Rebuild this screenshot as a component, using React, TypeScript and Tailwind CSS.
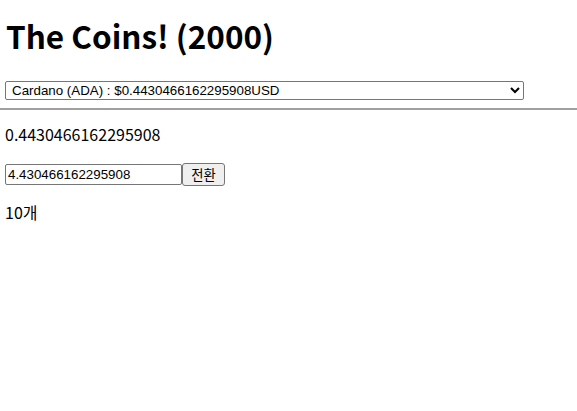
import { useState } from "react";

export default function App() {
  const [amount, setAmount] = useState("4.430466162295908");
  const price = 0.4430466162295908;

  return (
    <div className="min-h-screen bg-white text-black">
      <div className="px-[5px] font-['Noto_Sans_CJK_KR','Noto_Sans',sans-serif]">
        <h1 className="pt-[11px] pl-px text-[31.5px] font-bold leading-[48px]">
          The Coins! (2000)
        </h1>
        <select className="mt-[22px] h-[19px] w-[519px] rounded-[2px] border border-[#767676] bg-white pl-[2px] font-['Liberation_Sans',Arial,sans-serif] text-[13.33px] leading-none">
          <option>Cardano (ADA) : $0.4430466162295908USD</option>
        </select>
      </div>
      <hr className="mt-[8px] border-t-2 border-[#a0a0a0]" />
      <div className="px-[5px] font-['Noto_Sans_CJK_KR','Noto_Sans',sans-serif] text-[16px]">
        <p className="mt-[12px] leading-[24px]">{price}</p>
        <div className="mt-[17px] flex items-center">
          <input
            className="h-[21px] w-[177px] rounded-[2px] border border-[#767676] px-[2px] font-['Liberation_Sans',Arial,sans-serif] text-[13.33px]"
            value={amount}
            onChange={(e) => setAmount(e.target.value)}
          />
          <button className="h-[23px] w-[43px] rounded-[3px] border border-[#767676] bg-[#efefef] text-[13.33px]">
            전환
          </button>
        </div>
        <p className="mt-[14px] leading-[24px]">10개</p>
      </div>
    </div>
  );
}
